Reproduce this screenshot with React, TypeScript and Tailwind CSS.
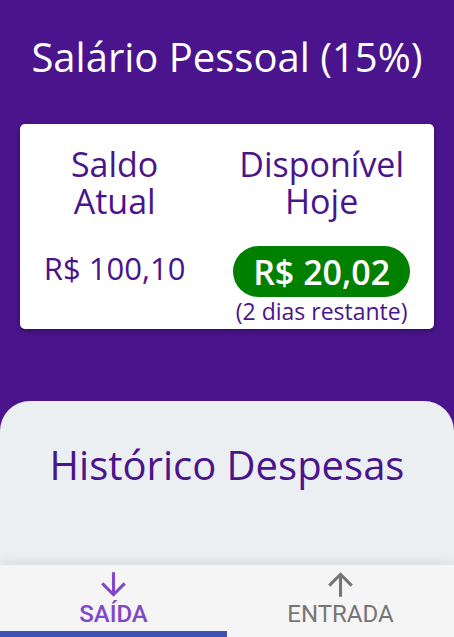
const heading = { fontFamily: '"Open Sans", "DejaVu Sans", sans-serif' };
const tabFont = { fontFamily: 'Roboto, "Liberation Sans", sans-serif' };

function ArrowIcon({ up }: { up?: boolean }) {
  return (
    <svg width="37" height="37" viewBox="0 0 24 24" fill="currentColor" className={up ? "rotate-180" : ""}>
      <path d="M20 12l-1.41-1.41L13 16.17V4h-2v12.17l-5.58-5.59L4 12l8 8 8-8z" />
    </svg>
  );
}

function Label({ top, bottom }: { top: string; bottom: string }) {
  return (
    <div className="flex flex-col items-center text-[34px] leading-[37px]">
      <span className="block h-[37px]">{top}</span>
      <span className="block h-[37px]">{bottom}</span>
    </div>
  );
}

export default function App() {
  return (
    <div className="h-[637px] w-full bg-[#4a148c] flex flex-col overflow-hidden" style={heading}>
      {/* Header */}
      <h1 className="pt-[33px] text-center text-white text-[40px] font-medium leading-[48px]">
        Salário Pessoal (15%)
      </h1>

      {/* Summary card */}
      <div className="mx-5 mt-[43px] h-[205px] bg-white rounded-[5px] shadow-[0_2px_4px_rgba(0,0,0,0.35)] flex justify-around pt-[22px] text-[#4a148c]">
        <div className="flex flex-col items-center">
          <Label top="Saldo" bottom="Atual" />
          <p className="mt-[30px] text-[31px] leading-[36px] whitespace-nowrap">R$ 100,10</p>
        </div>
        <div className="flex flex-col items-center">
          <Label top="Disponível" bottom="Hoje" />
          <div className="mt-[26px] h-[51px] w-[177px] rounded-full bg-[#008000] flex items-center justify-center">
            <span className="text-white text-[34px] font-semibold leading-none">R$ 20,02</span>
          </div>
          <p className="mt-[1px] text-[23px] leading-[26px] whitespace-nowrap">(2 dias restante)</p>
        </div>
      </div>

      {/* History sheet */}
      <div className="mt-[72px] flex-1 bg-[#eceff1] rounded-t-[30px] pt-[42px]">
        <h2 className="text-center text-[#4a148c] text-[40px] leading-[44px]">Histórico Despesas</h2>
      </div>

      {/* Bottom tabs */}
      <nav className="h-[72px] bg-[#f5f5f5] grid grid-cols-2 shadow-[0_-4px_10px_rgba(0,0,0,0.07)]" style={tabFont}>
        <button className="relative flex flex-col items-center pt-[1px] text-[#8047c8]">
          <ArrowIcon />
          <span className="-mt-[1px] text-[24px] font-medium leading-[24px]">SAÍDA</span>
          <span className="absolute bottom-0 left-0 right-0 h-[6px] bg-[#3f51b5]" />
        </button>
        <button className="flex flex-col items-center pt-[1px] text-[#757575]">
          <ArrowIcon up />
          <span className="-mt-[1px] text-[24px] leading-[24px]">ENTRADA</span>
        </button>
      </nav>
    </div>
  );
}
